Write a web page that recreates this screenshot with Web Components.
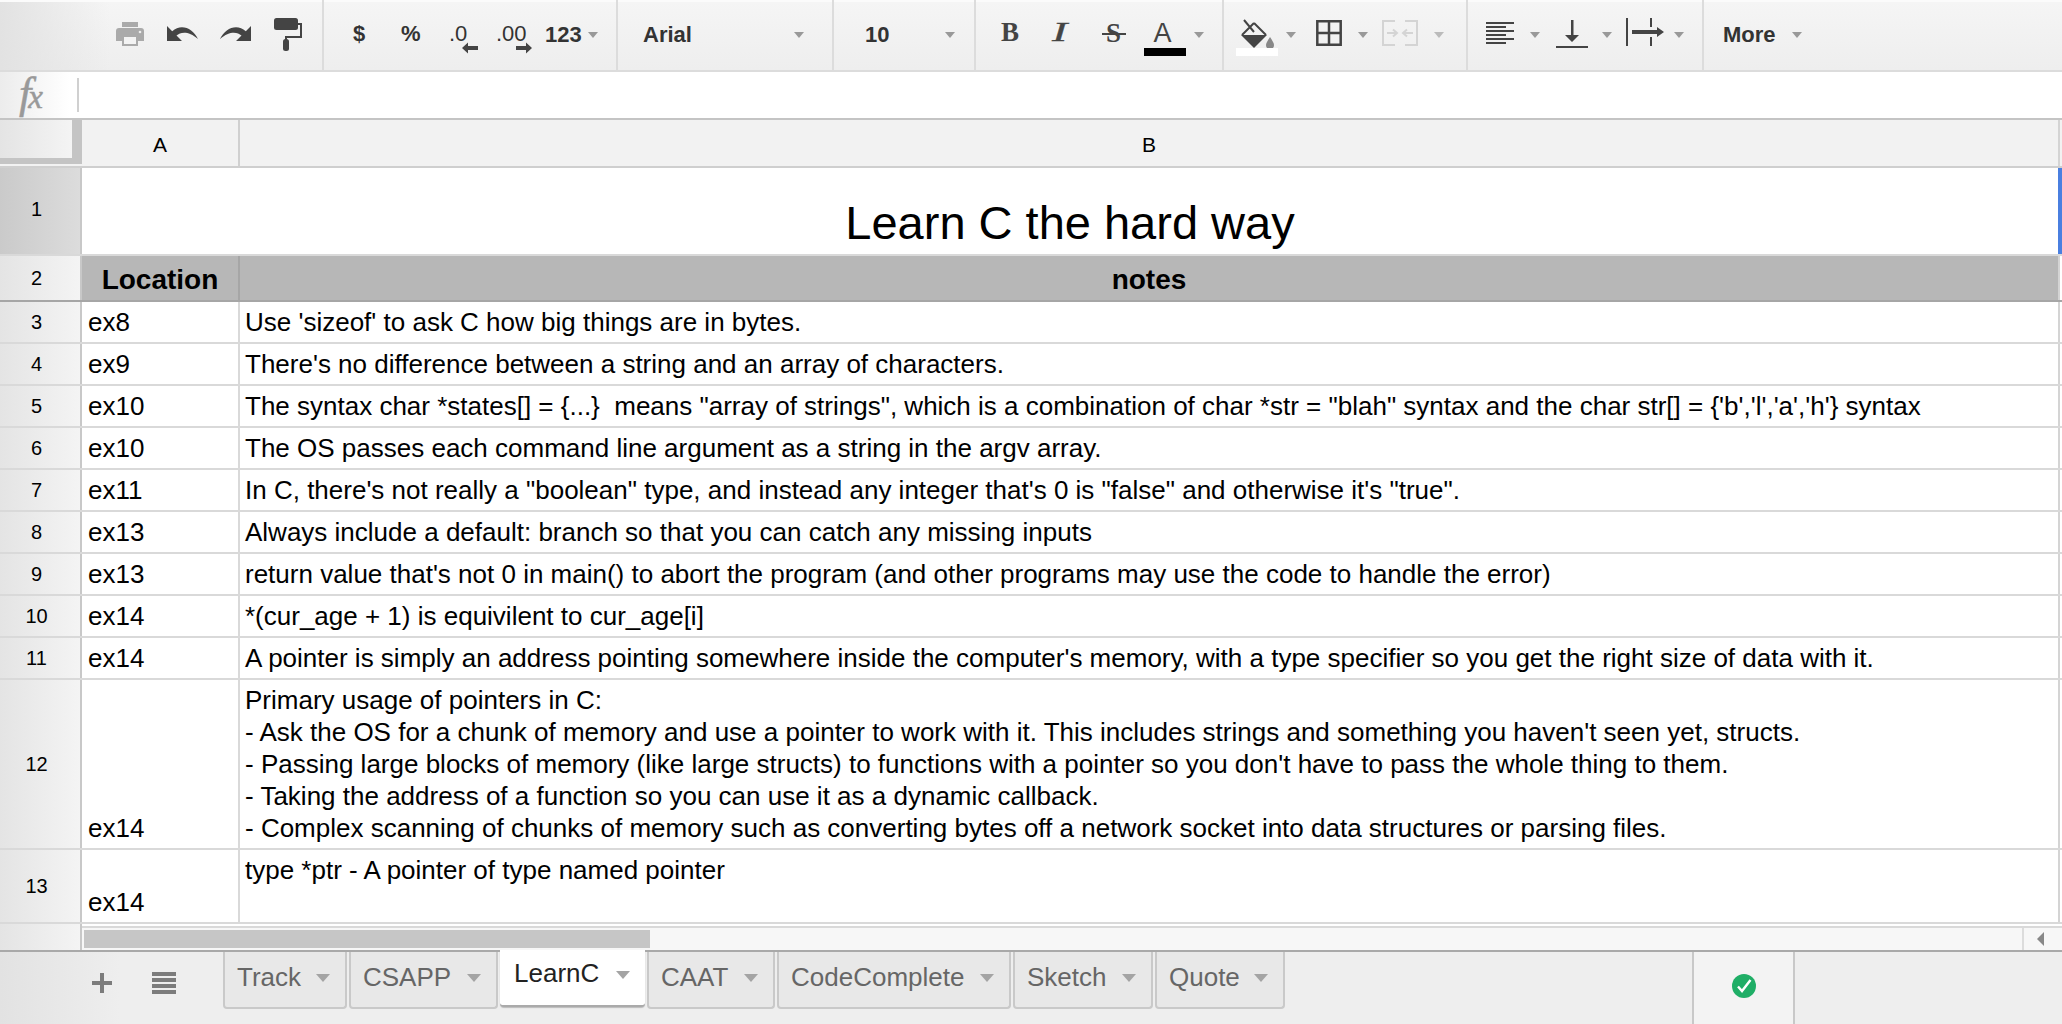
<!DOCTYPE html>
<html><head><meta charset="utf-8"><style>
html,body{margin:0;padding:0;background:#fff}
body{width:2062px;height:1024px;overflow:hidden;font-family:"Liberation Sans",Arial,sans-serif;color:#000}
</style></head><body>
<gs-app>
  <gs-toolbar></gs-toolbar>
  <gs-formula></gs-formula>
  <gs-sheet>
    <gs-colhead></gs-colhead>
    <gs-title-row n="1">Learn C the hard way</gs-title-row>
    <gs-head-row n="2" a="Location">notes</gs-head-row>
    <gs-row n="3" a="ex8">Use 'sizeof' to ask C how big things are in bytes.</gs-row>
    <gs-row n="4" a="ex9">There's no difference between a string and an array of characters.</gs-row>
    <gs-row n="5" a="ex10">The syntax char *states[] = {...}&nbsp; means "array of strings", which is a combination of char *str = "blah" syntax and the char str[] = {'b','l','a','h'} syntax</gs-row>
    <gs-row n="6" a="ex10">The OS passes each command line argument as a string in the argv array.</gs-row>
    <gs-row n="7" a="ex11">In C, there's not really a "boolean" type, and instead any integer that's 0 is "false" and otherwise it's "true".</gs-row>
    <gs-row n="8" a="ex13">Always include a default: branch so that you can catch any missing inputs</gs-row>
    <gs-row n="9" a="ex13">return value that's not 0 in main() to abort the program (and other programs may use the code to handle the error)</gs-row>
    <gs-row n="10" a="ex14">*(cur_age + 1) is equivilent to cur_age[i]</gs-row>
    <gs-row n="11" a="ex14">A pointer is simply an address pointing somewhere inside the computer's memory, with a type specifier so you get the right size of data with it.</gs-row>
    <gs-row n="12" a="ex14" h="168">Primary usage of pointers in C:<br>- Ask the OS for a chunk of memory and use a pointer to work with it. This includes strings and something you haven't seen yet, structs.<br>- Passing large blocks of memory (like large structs) to functions with a pointer so you don't have to pass the whole thing to them.<br>- Taking the address of a function so you can use it as a dynamic callback.<br>- Complex scanning of chunks of memory such as converting bytes off a network socket into data structures or parsing files.</gs-row>
    <gs-row n="13" a="ex14" h="72" top>type *ptr - A pointer of type named pointer</gs-row>
    <gs-scroll></gs-scroll>
  </gs-sheet>
  <gs-bottom>
    <gs-tab w="124">Track</gs-tab><gs-tab w="149">CSAPP</gs-tab><gs-tab w="145" active>LearnC</gs-tab><gs-tab w="128">CAAT</gs-tab><gs-tab w="234">CodeComplete</gs-tab><gs-tab w="140">Sketch</gs-tab><gs-tab w="130">Quote</gs-tab>
  </gs-bottom>
</gs-app>
<script>
const SANS='"Liberation Sans",Arial,sans-serif', SERIF='"Liberation Serif","Times New Roman",serif';
function el(tag,render){customElements.define(tag,class extends HTMLElement{constructor(){super();this.attachShadow({mode:'open'});}connectedCallback(){if(!this._d){this._d=1;this.shadowRoot.innerHTML=render(this);}}});}

el('gs-app',()=>`<style>:host{display:flex;flex-direction:column;width:2062px;height:1024px;overflow:hidden}</style><slot></slot>`);

el('tb-caret',()=>`<style>:host{display:block;width:0;height:0;border-left:5.5px solid transparent;border-right:5.5px solid transparent;border-top:6px solid #999}</style>`);
el('tb-sep',()=>`<style>:host{display:block;flex:none;width:2px;height:70px;background:#dcdcdc}</style>`);
el('tb-item',()=>`<style>:host{display:block;flex:none}::slotted(svg){display:block;overflow:visible}</style><slot></slot>`);

const K='#444';
const sv=(w,h,b)=>`<svg xmlns="http://www.w3.org/2000/svg" width="${w}" height="${h}" viewBox="0 0 ${w} ${h}">${b}</svg>`;
const T=(x,y,w,h,t)=>[x,y,w,h,`<span class="tt" style="line-height:${h}px">${t}</span>`];
const I=(x,y,w,h,b)=>[x,y,w,h,sv(w,h,b)];
const C=(x)=>[x,32,11,6,`<tb-caret></tb-caret>`];
const groups=[
 [322,[
  I(116,22,28,24,`<path fill="#aaa" d="M6 0h16v5H6zM3 6h22a3 3 0 0 1 3 3v10h-6v-6H6v6H0V9a3 3 0 0 1 3-3z"/><rect x="7" y="14" width="14" height="9" fill="#f3f3f3" stroke="#aaa" stroke-width="2"/><circle cx="24" cy="10" r="1.300" fill="#eee"/>`),
  I(167,26,31,15,`<path fill="${K}" d="M0 0v15h15l-5.500-5.500C14 5.500 22 5 31 13 26 2 14-3 5.200 5.200z"/>`),
  I(220,26,31,15,`<path fill="${K}" d="M31 0v15H16l5.500-5.500C17 5.500 9 5 0 13 5 2 17-3 25.800 5.200z"/>`),
  I(274,18,28,32,`<rect x="0" y="0" width="24" height="12" rx="2.500" fill="${K}"/><path fill="none" stroke="${K}" stroke-width="2" d="M24 6h3v13H12v4"/><rect x="9" y="21" width="6" height="12" rx="2.500" fill="${K}"/>`)
 ]],
 [292,[
  T(353,22,13,24,'$'),T(401,22,20,24,'%'),
  I(449,22,30,32,`<text class="ts" x="0" y="19">.0</text><path fill="${K}" d="M13 26l6-5.500V24h10v4H19v3.500z"/>`),
  I(496,22,37,32,`<text class="ts" x="0" y="19">.00</text><path fill="${K}" d="M36 26l-6-5.500V24H20v4h10v3.500z"/>`),
  T(545,23,37,24,'123'),C(588)
 ]],
 [214,[T(643,23,50,24,'Arial'),C(794)]],
 [140,[T(865,23,25,24,'10'),C(945)]],
 [246,[
  I(1001,22,19,22,`<text x="0" y="19" style="font:bold 27px 'Liberation Serif',serif" fill="${K}">B</text>`),
  I(1052,22,22,22,`<text x="0" y="19" transform="scale(1.7 1)" style="font:italic 27px 'Liberation Serif',serif" fill="${K}" stroke="${K}" stroke-width=".3">I</text>`),
  I(1102,22,24,24,`<text x="4" y="20" style="font:bold 27px 'Liberation Serif',serif" fill="${K}">S</text><rect x="0" y="11" width="24" height="2" fill="${K}"/>`),
  I(1144,20,42,36,`<text x="9.500" y="22" style="font:27px 'Liberation Sans',sans-serif" fill="${K}">A</text><rect x="0" y="28" width="42" height="8" fill="#000"/>`),
  C(1194)
 ]],
 [242,[
  I(1236,20,42,36,`<path fill="${K}" d="M5 15h26L18 28z"/><path fill="none" stroke="${K}" stroke-width="2" d="M18 3l12 12M18 3L6 15M8 0l10 12"/><path fill="#888" d="M34 17c2 3 4 6 4 8a4 4 0 0 1-8 0c0-2 2-5 4-8z"/><rect x="0" y="28" width="42" height="8" fill="#fff"/>`),
  C(1286),
  I(1316,20,26,26,`<path fill="none" stroke="${K}" stroke-width="2.500" d="M1.300 1.300h23.400v23.400H1.300zM13 1v24M1 13h24"/>`),
  C(1358),
  I(1382,20,36,26,`<path fill="none" stroke="#d4d4d4" stroke-width="2" d="M13 1H1v24h12M23 1h12v24H23"/><path fill="none" stroke="#d4d4d4" stroke-width="2" d="M5 13h9M11 9.500l4 3.500-4 3.500M31 13h-9M25 9.500L21 13l4 3.500"/>`),
  [1434,32,11,6,`<tb-caret style="border-top-color:#bbb"></tb-caret>`]
 ]],
 [234,[
  I(1486,22,28,22,`<path fill="${K}" d="M0 0h28v2H0zM0 4h20v2H0zM0 8h28v2H0zM0 12h20v2H0zM0 16h28v2H0zM0 20h20v2H0z"/>`),
  C(1530),
  I(1556,20,32,28,`<path fill="${K}" d="M0 26h32v2H0zM15 0h2.500v15H23l-7 7-7-7h6z"/>`),
  C(1602),
  I(1626,18,38,28,`<path fill="${K}" d="M0 0h2v28H0zM24 0h2v9h-2zM24 19h2v9h-2zM6 12h25V9l7 5-7 5v-3H6z"/>`),
  C(1674)
 ]],
 [358,[T(1723,23,54,24,'More'),C(1792)]]
];
el('gs-toolbar',()=>{
 let h='',start=0;
 groups.forEach(([w,items],gi)=>{
  let cur=start;
  const inner=items.map(([x,y,iw,ih,html])=>{const m=x-cur;cur=x+iw;return `<tb-item style="margin-left:${m}px;margin-top:${y-2}px;width:${iw}px;height:${ih}px">${html}</tb-item>`}).join('');
  h+=`<div class="g" style="width:${w}px">${inner}</div>`;
  if(gi<groups.length-1)h+=`<tb-sep></tb-sep>`;
  start+=w+2;
 });
 return `<style>:host{display:flex;flex:none;height:68px;border-top:2px solid #fbfbfb;border-bottom:2px solid #dcdcdc;background:linear-gradient(90deg,#e2e2e2,rgba(226,226,226,0) 110px),linear-gradient(#f5f5f5,#eeeeee)}
 .g{display:flex;flex:none;align-items:flex-start;height:68px}tb-sep{margin-top:-2px}
 .tt{display:block;white-space:nowrap;font-family:${SANS};font-weight:bold;font-size:22px;color:#333}
 .ts{font-family:${SANS};font-size:22px;fill:#333}</style>${h}`;
});

el('gs-formula',()=>`<style>:host{display:flex;flex:none;height:46px;border-bottom:2px solid #c4c4c4;background:#fff}
 .fx{display:block;flex:none;width:77px;background:linear-gradient(90deg,#ececec,#fff 70px);padding-left:19px;box-sizing:border-box;font:italic 44px/44px ${SERIF};color:#999;-webkit-text-stroke:.5px #999;white-space:nowrap}
 .fx span{font-size:33px;margin-left:-3px}
 .s{flex:none;width:2px;height:34px;margin-top:6px;background:#d0d0d0}</style><div class="fx">f<span>x</span></div><div class="s"></div>`);

el('gs-sheet',()=>`<style>:host{display:flex;flex-direction:column;flex:none;height:830px}</style><slot></slot>`);

el('gs-colhead',()=>`<style>:host{display:flex;flex:none;height:46px;border-bottom:2px solid #cfcfcf;background:#f2f2f2;font:21px/49px ${SANS};color:#000;text-align:center}
 .c{flex:none;width:72px;height:38px;background:linear-gradient(90deg,#e4e4e4,#f4f4f4);border-right:10px solid #c4c4c4;border-bottom:6px solid #c4c4c4}
 .a{flex:none;width:156px;border-right:2px solid #d0d0d0}.b{flex:none;width:1818px;border-right:2px solid #d4d4d4}</style>
 <div class="c"></div><div class="a">A</div><div class="b">B</div>`);

const numCss=`.n{flex:none;padding-right:7px;border-right:2px solid #c8c8c8;width:73px;display:flex;align-items:center;justify-content:center;font:20px/24px ${SANS};background:linear-gradient(90deg,#e4e4e4,#f4f4f4)}`;

el('gs-title-row',h=>`<style>:host{display:flex;flex:none;height:86px;border-bottom:2px solid #d9d9d9}${numCss}
 .n{background:linear-gradient(90deg,#cacaca,#dcdcdc);padding-bottom:4px;height:82px}
 .t{flex:none;width:1976px;display:flex;align-items:flex-end;justify-content:center;font:47px/54px ${SANS};padding-bottom:4px;box-sizing:border-box}
 .e{flex:none;width:4px;background:#4a7fe0}</style><div class="n">${h.getAttribute('n')}</div><div class="t"><slot></slot></div><div class="e"></div>`);

el('gs-head-row',h=>`<style>:host{display:flex;flex:none;height:44px;border-bottom:2px solid #a6a6a6}${numCss}
 .a,.b{display:flex;align-items:center;justify-content:center;background:#b7b7b7;font:bold 28px/44px ${SANS};padding-top:4px;box-sizing:border-box}
 .a{flex:none;width:158px;border-right:2px solid #a6a6a6}.b{flex:none;width:1820px;border-right:2px solid #d4d4d4}</style>
 <div class="n">${h.getAttribute('n')}</div><div class="a">${h.getAttribute('a')}</div><div class="b"><slot></slot></div>`);

el('gs-row',h=>`<style>:host{display:flex;flex:none;height:${h.getAttribute('h')||40}px;border-bottom:2px solid #d9d9d9;font:26px/32px ${SANS}}${numCss}
 .a,.b{display:flex;box-sizing:border-box;padding:4px 5px;white-space:nowrap;align-items:flex-end}
 .a{flex:none;width:158px;border-right:2px solid #d9d9d9;padding-left:6px}.b{flex:none;width:1820px;border-right:2px solid #d4d4d4}
 ${h.hasAttribute('top')?'.b{align-items:flex-start}':''}
 .w{display:block}</style><div class="n">${h.getAttribute('n')}</div><div class="a">${h.getAttribute('a')}</div><div class="b"><span class="w"><slot></slot></span></div>`);

el('gs-scroll',()=>`<style>:host{display:flex;flex:none;height:26px;background:#f7f7f7}
 .l{flex:none;width:80px;border-right:2px solid #c8c8c8;background:linear-gradient(90deg,#e4e4e4,#f4f4f4)}
 .m{flex:1;display:flex;flex-direction:column}
 .top{height:2px;flex:none;background:#fff}.line{height:2px;flex:none;background:#d9d9d9}
 .tr{flex:1;display:flex;padding:2px 0 2px 2px}
 .th{flex:none;width:566px;background:#c6c6c6}.sp{flex:1}
 .btn{flex:none;width:32px;margin:-2px 6px -2px 0;border-left:2px solid #dcdcdc;display:flex;align-items:center;justify-content:center}
 .btn i{display:block;width:0;height:0;border-top:7px solid transparent;border-bottom:7px solid transparent;border-right:7px solid #888}</style>
 <div class="l"></div><div class="m"><div class="top"></div><div class="line"></div><div class="tr"><div class="th"></div><div class="sp"></div><div class="btn"><i></i></div></div></div>`);

el('gs-tab',h=>{const a=h.hasAttribute('active');return `<style>:host{display:flex;flex:none;box-sizing:border-box;width:${h.getAttribute('w')}px;height:57px;margin-right:2px;padding:0 0 6px 12px;align-items:center;font:26px/32px ${SANS};color:#666;background:#e8e8e8;border:2px solid #c9c9c9;border-top:0;border-radius:0 0 4px 4px;white-space:nowrap}
 ${a?':host{background:#fff;color:#222;margin-top:-2px;border:0;border-bottom:2px solid #aaa;box-shadow:0 1px 1px #bbb;padding-left:14px;padding-bottom:10px}':''}
 i{display:block;flex:none;margin:${a?4:2}px 15px 0 auto;width:0;height:0;border-left:7px solid transparent;border-right:7px solid transparent;border-top:8px solid #a4a4a4}</style><span><slot></slot></span><i></i>`});

el('gs-bottom',()=>`<style>:host{display:flex;flex:none;height:72px;border-top:2px solid #a9a9a9;background:linear-gradient(90deg,#e2e2e2,rgba(226,226,226,0) 120px),#eeeeee;align-items:flex-start}
 svg{display:block;flex:none}
 .plus{margin:21px 0 0 92px}.menu{margin:20px 0 0 40px}
 .tabs{display:flex;flex:none;width:1469px;margin-left:47px;}
 .st{flex:none;width:99px;height:72px;border-left:2px solid #c8c8c8;border-right:2px solid #c8c8c8;background:#f3f3f3;display:flex;align-items:center;justify-content:center}
 </style>
 <svg class="plus" width="20" height="20" viewBox="0 0 20 20"><path fill="#7c7c7c" d="M8 0h4v8h8v4h-8v8H8v-8H0V8h8z"/></svg>
 <svg class="menu" width="24" height="22" viewBox="0 0 24 22"><path fill="#7c7c7c" d="M0 0h24v4H0zM0 6h24v4H0zM0 12h24v4H0zM0 18h24v4H0z"/></svg>
 <div class="tabs"><slot></slot></div>
 <div class="st"><svg width="24" height="24" viewBox="0 0 24 24" style="margin-top:-4px"><circle cx="12" cy="12" r="12" fill="#1fae66"/><path fill="none" stroke="#fff" stroke-width="2.400" d="M6 12.500l4 4.500 8.500-11"/></svg></div>`);
</script>
</body></html>
